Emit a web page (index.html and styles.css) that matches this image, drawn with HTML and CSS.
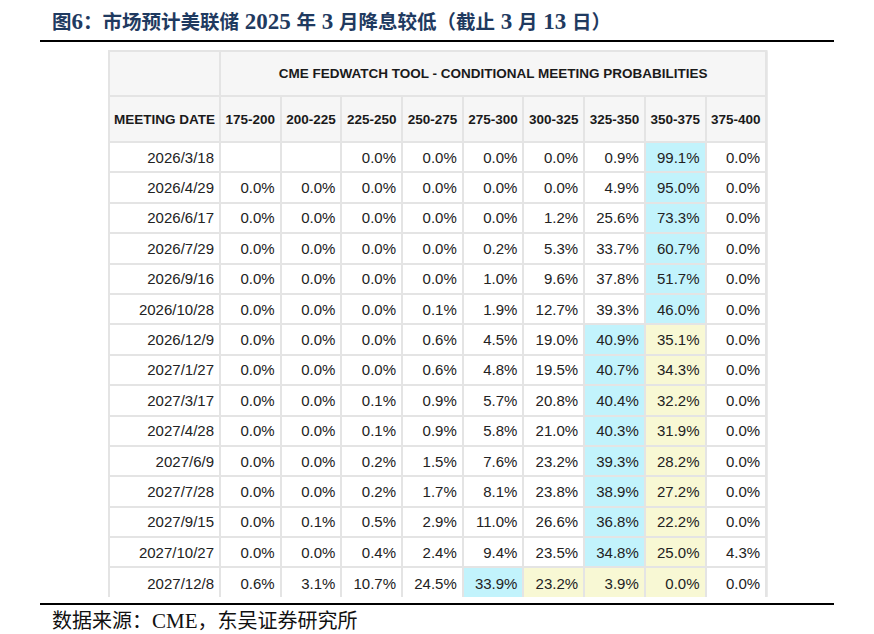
FILE: index.html
```html
<!DOCTYPE html>
<html lang="zh-CN">
<head>
<meta charset="utf-8">
<title>图6</title>
<link rel="stylesheet" href="styles.css">
</head>
<body>
<div class="page">
  <h1 class="title">图<span class="num">6</span>：市场预计美联储<span class="num"> 2025 </span>年<span class="num"> 3 </span>月降息较低（截止<span class="num"> 3 </span>月<span class="num"> 13 </span>日）</h1>
  <div class="rule"></div>
  <div class="figure">
    <table class="fed">
      <colgroup>
        <col class="c-date">
        <col><col><col><col><col><col><col><col><col>
      </colgroup>
      <thead>
        <tr class="h1">
          <th></th>
          <th colspan="9">CME FEDWATCH TOOL - CONDITIONAL MEETING PROBABILITIES</th>
        </tr>
        <tr class="h2">
          <th>MEETING DATE</th>
          <th>175-200</th><th>200-225</th><th>225-250</th><th>250-275</th><th>275-300</th><th>300-325</th><th>325-350</th><th>350-375</th><th>375-400</th>
        </tr>
      </thead>
      <tbody>
        <tr><td>2026/3/18</td><td></td><td></td><td>0.0%</td><td>0.0%</td><td>0.0%</td><td>0.0%</td><td>0.9%</td><td class="cy">99.1%</td><td>0.0%</td></tr>
        <tr><td>2026/4/29</td><td>0.0%</td><td>0.0%</td><td>0.0%</td><td>0.0%</td><td>0.0%</td><td>0.0%</td><td>4.9%</td><td class="cy">95.0%</td><td>0.0%</td></tr>
        <tr><td>2026/6/17</td><td>0.0%</td><td>0.0%</td><td>0.0%</td><td>0.0%</td><td>0.0%</td><td>1.2%</td><td>25.6%</td><td class="cy">73.3%</td><td>0.0%</td></tr>
        <tr><td>2026/7/29</td><td>0.0%</td><td>0.0%</td><td>0.0%</td><td>0.0%</td><td>0.2%</td><td>5.3%</td><td>33.7%</td><td class="cy">60.7%</td><td>0.0%</td></tr>
        <tr><td>2026/9/16</td><td>0.0%</td><td>0.0%</td><td>0.0%</td><td>0.0%</td><td>1.0%</td><td>9.6%</td><td>37.8%</td><td class="cy">51.7%</td><td>0.0%</td></tr>
        <tr><td>2026/10/28</td><td>0.0%</td><td>0.0%</td><td>0.0%</td><td>0.1%</td><td>1.9%</td><td>12.7%</td><td>39.3%</td><td class="cy">46.0%</td><td>0.0%</td></tr>
        <tr><td>2026/12/9</td><td>0.0%</td><td>0.0%</td><td>0.0%</td><td>0.6%</td><td>4.5%</td><td>19.0%</td><td class="cy">40.9%</td><td class="ye">35.1%</td><td>0.0%</td></tr>
        <tr><td>2027/1/27</td><td>0.0%</td><td>0.0%</td><td>0.0%</td><td>0.6%</td><td>4.8%</td><td>19.5%</td><td class="cy">40.7%</td><td class="ye">34.3%</td><td>0.0%</td></tr>
        <tr><td>2027/3/17</td><td>0.0%</td><td>0.0%</td><td>0.1%</td><td>0.9%</td><td>5.7%</td><td>20.8%</td><td class="cy">40.4%</td><td class="ye">32.2%</td><td>0.0%</td></tr>
        <tr><td>2027/4/28</td><td>0.0%</td><td>0.0%</td><td>0.1%</td><td>0.9%</td><td>5.8%</td><td>21.0%</td><td class="cy">40.3%</td><td class="ye">31.9%</td><td>0.0%</td></tr>
        <tr><td>2027/6/9</td><td>0.0%</td><td>0.0%</td><td>0.2%</td><td>1.5%</td><td>7.6%</td><td>23.2%</td><td class="cy">39.3%</td><td class="ye">28.2%</td><td>0.0%</td></tr>
        <tr><td>2027/7/28</td><td>0.0%</td><td>0.0%</td><td>0.2%</td><td>1.7%</td><td>8.1%</td><td>23.8%</td><td class="cy">38.9%</td><td class="ye">27.2%</td><td>0.0%</td></tr>
        <tr><td>2027/9/15</td><td>0.0%</td><td>0.1%</td><td>0.5%</td><td>2.9%</td><td>11.0%</td><td>26.6%</td><td class="cy">36.8%</td><td class="ye">22.2%</td><td>0.0%</td></tr>
        <tr><td>2027/10/27</td><td>0.0%</td><td>0.0%</td><td>0.4%</td><td>2.4%</td><td>9.4%</td><td>23.5%</td><td class="cy">34.8%</td><td class="ye">25.0%</td><td>4.3%</td></tr>
        <tr class="last"><td>2027/12/8</td><td>0.6%</td><td>3.1%</td><td>10.7%</td><td>24.5%</td><td class="cy">33.9%</td><td class="ye">23.2%</td><td class="ye">3.9%</td><td class="ye">0.0%</td><td>0.0%</td></tr>
      </tbody>
    </table>
  </div>
  <div class="rule rule-bottom"></div>
  <p class="source">数据来源：<span class="lat">CME</span>，东吴证券研究所</p>
</div>
</body>
</html>
```

FILE: styles.css
```css
html, body {
  margin: 0;
  padding: 0;
  background: #ffffff;
}

.page {
  width: 874px;
  height: 634px;
  overflow: hidden;
  padding: 0 40px;
  box-sizing: border-box;
}

.title {
  margin: 0;
  padding: 10px 0 0 12px;
  height: 30px;
  font-family: "Liberation Serif", "Noto Sans CJK SC", serif;
  font-weight: 700;
  font-size: 19.5px;
  line-height: 24px;
  color: #1f3a60;
  white-space: nowrap;
}

.title .num {
  font-size: 23px;
}

.rule {
  height: 2px;
  background: #000000;
}

.figure {
  margin: 8px 0 0 68px;
  width: 660px;
  height: 547px;
  overflow: hidden;
}

.fed {
  table-layout: fixed;
  border-collapse: collapse;
  width: 657px;
  font-family: "Liberation Sans", Arial, sans-serif;
  font-size: 15px;
  color: #222222;
  box-shadow: 1px 0 2px rgba(0, 0, 0, 0.12);
}

.fed col {
  width: 60.7px;
}

.fed col.c-date {
  width: 111px;
}

.fed th,
.fed td {
  border: 2px solid #e4e4e4;
  padding: 0 5px 0 0;
  white-space: nowrap;
}

.fed th {
  background: #f6f6f6;
  font-weight: 700;
  font-size: 13.5px;
  text-align: center;
  padding: 0;
  color: #1a1a1a;
}

.fed .h1 {
  height: 45px;
}

.fed .h2 {
  height: 46px;
}

.fed tbody tr {
  height: 30.4px;
}

.fed td {
  text-align: right;
  background: #ffffff;
}

.fed td.cy {
  background: #c2f3fc;
}

.fed td.ye {
  background: #f8f8d4;
}

.fed tr.last td {
  border-bottom: none;
}

.rule-bottom {
  margin-top: 6px;
}

.source {
  margin: 0;
  padding: 4px 0 0 12px;
  font-family: "Liberation Serif", "Noto Sans CJK SC", serif;
  font-size: 20px;
  line-height: 24px;
  color: #111111;
  white-space: nowrap;
}

.source .lat {
  font-size: 21px;
}
```
